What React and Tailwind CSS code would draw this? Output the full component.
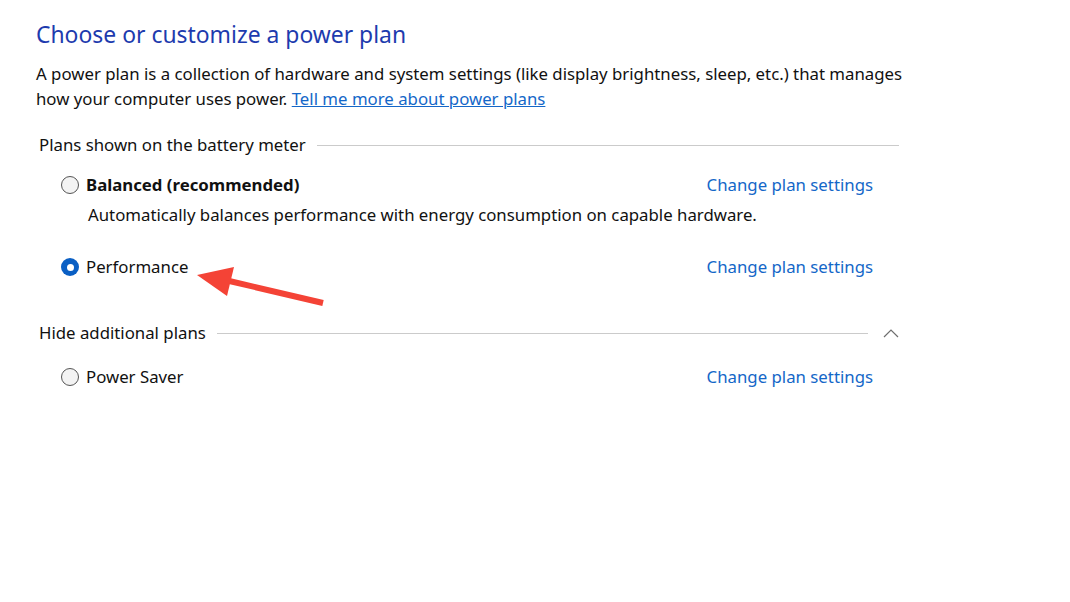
import React from "react";

function Radio({ checked }) {
  if (checked) {
    return (
      <span className="w-[18px] h-[18px] rounded-full bg-[#0a5fc4] flex items-center justify-center shrink-0">
        <span className="w-[7px] h-[7px] rounded-full bg-white" />
      </span>
    );
  }
  return (
    <span className="w-[18px] h-[18px] rounded-full border border-[#555] bg-[#f3f3f3] shrink-0" />
  );
}

function PlanRow({ name, bold, checked, className = "" }) {
  return (
    <div className={"ml-[25px] w-[812px] h-[30px] flex items-center justify-between " + className}>
      <div className="flex items-center gap-[7px]">
        <Radio checked={checked} />
        <span className={bold ? "font-bold text-[#111]" : "text-[#111]"}>{name}</span>
      </div>
      <a className="text-[#1467c8] cursor-pointer">Change plan settings</a>
    </div>
  );
}

function SectionHeader({ title, lineWidth, chevron, className = "" }) {
  return (
    <div className={"ml-[3px] h-[30px] flex items-center " + className}>
      <span className="text-[#111]">{title}</span>
      <div className={"ml-[11px] h-px bg-[#cbcbcb] " + lineWidth} />
      {chevron && (
        <svg width="16" height="9" viewBox="0 0 16 9" className="ml-[15px]">
          <path d="M1 8 L8 1 L15 8" fill="none" stroke="#6e6e6e" strokeWidth="1.2" />
        </svg>
      )}
    </div>
  );
}

export default function App() {
  return (
    <div
      className="min-h-screen bg-white relative text-[16.8px]"
      style={{ fontFamily: '"Segoe UI", "Noto Sans", sans-serif' }}
    >
      <div className="ml-[36px] pt-[20px] w-[900px]">
        <h1 className="h-[30px] flex items-center text-[22.9px] text-[#1d3bae]">
          Choose or customize a power plan
        </h1>
        <p className="mt-[11px] leading-[25px] text-[#111]">
          A power plan is a collection of hardware and system settings (like display brightness, sleep, etc.) that manages
          <br />
          how your computer uses power.{" "}
          <a className="text-[#1467c8] underline cursor-pointer">Tell me more about power plans</a>
        </p>

        <SectionHeader title="Plans shown on the battery meter" lineWidth="w-[582px]" className="mt-[19px]" />

        <PlanRow name="Balanced (recommended)" bold className="mt-[10px]" />
        <div className="ml-[52px] h-[30px] flex items-center text-[#111]">
          Automatically balances performance with energy consumption on capable hardware.
        </div>
        <PlanRow name="Performance" checked className="mt-[22px]" />

        <SectionHeader title="Hide additional plans" lineWidth="w-[651px]" chevron className="mt-[36px]" />

        <PlanRow name="Power Saver" className="mt-[14px]" />
      </div>

      <svg className="absolute left-0 top-0 pointer-events-none" width="1070" height="602">
        <line x1="323" y1="303" x2="225" y2="280" stroke="#f44336" strokeWidth="6" />
        <polygon points="197,275 234,267 227,296" fill="#f44336" />
      </svg>
    </div>
  );
}
